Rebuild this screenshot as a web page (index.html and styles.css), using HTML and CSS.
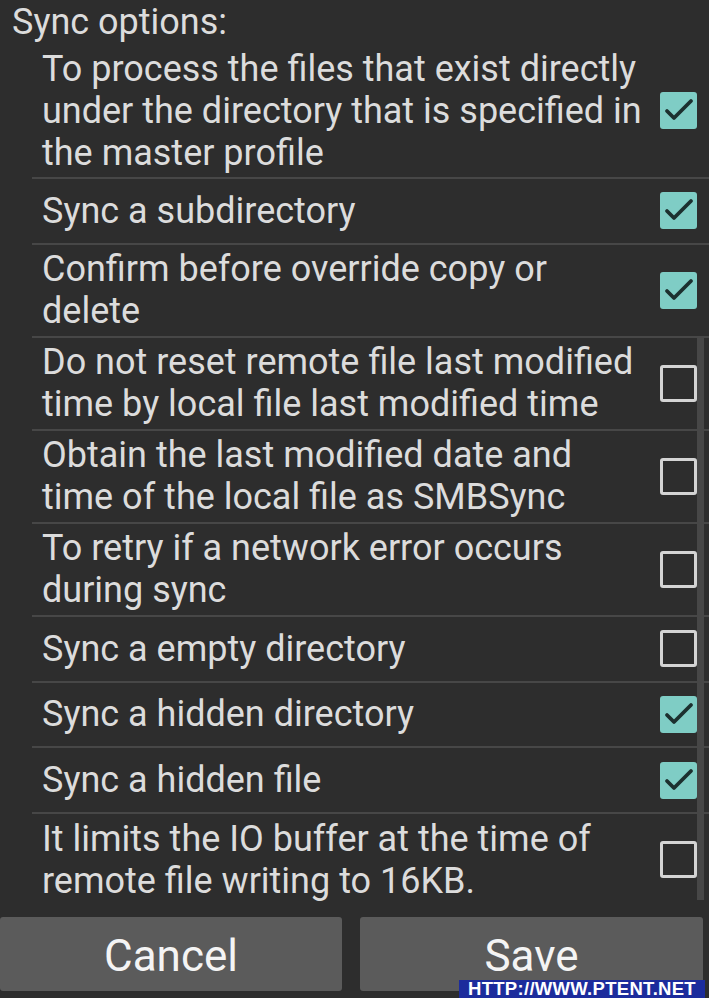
FILE: index.html
```html
<!DOCTYPE html>
<html>
<head>
<meta charset="utf-8">
<link rel="stylesheet" href="styles.css">
</head>
<body>
<div class="screen">
  <div class="header">Sync options:</div>
  <div class="list">
    <div class="row"><div class="label">To process the files that exist directly under the directory that is specified in the master profile</div><span class="cb on"><svg viewBox="0 0 37 37"><polyline points="7,19 14,26 31,9"/></svg></span></div>
    <div class="row"><div class="label">Sync a subdirectory</div><span class="cb on"><svg viewBox="0 0 37 37"><polyline points="7,19 14,26 31,9"/></svg></span></div>
    <div class="row"><div class="label">Confirm before override copy or delete</div><span class="cb on"><svg viewBox="0 0 37 37"><polyline points="7,19 14,26 31,9"/></svg></span></div>
    <div class="row"><div class="label">Do not reset remote file last modified time by local file last modified time</div><span class="cb"></span></div>
    <div class="row"><div class="label">Obtain the last modified date and time of the local file as SMBSync</div><span class="cb"></span></div>
    <div class="row"><div class="label">To retry if a network error occurs during sync</div><span class="cb"></span></div>
    <div class="row"><div class="label">Sync a empty directory</div><span class="cb"></span></div>
    <div class="row"><div class="label">Sync a hidden directory</div><span class="cb on"><svg viewBox="0 0 37 37"><polyline points="7,19 14,26 31,9"/></svg></span></div>
    <div class="row"><div class="label">Sync a hidden file</div><span class="cb on"><svg viewBox="0 0 37 37"><polyline points="7,19 14,26 31,9"/></svg></span></div>
    <div class="row last"><div class="label">It limits the IO buffer at the time of remote file writing to 16KB.</div><span class="cb"></span></div>
  </div>
  <div class="buttons">
    <div class="btn"><span class="btn-text">Cancel</span></div>
    <div class="btn"><span class="btn-text">Save</span></div>
  </div>
  <div class="scrollbar"></div>
  <div class="watermark">HTTP://WWW.PTENT.NET</div>
</div>
</body>
</html>
```
FILE: styles.css
```css
html, body {
  margin: 0;
  padding: 0;
  background: #2d2d2d;
}
.screen {
  position: relative;
  width: 709px;
  height: 998px;
  overflow: hidden;
  background: #2d2d2d;
  font-family: Roboto, "Noto Sans", sans-serif;
  color: #dcdcdc;
}
.header {
  height: 44px;
  line-height: 44px;
  padding-left: 12px;
  font-size: 36px;
}
.list {
  margin-left: 32px;
}
.row {
  display: flex;
  align-items: center;
  box-sizing: border-box;
  min-height: 65.75px;
  padding: 3.5px 0 3.5px 10px;
  border-bottom: 2px solid #474747;
}
.row.last {
  border-bottom: none;
}
.label {
  flex: 1;
  font-size: 36px;
  line-height: 42px;
}
.cb {
  flex: none;
  box-sizing: border-box;
  width: 37px;
  height: 37px;
  margin: 0 12px 0 18px;
  border: 3px solid #d4d4d4;
  border-radius: 3px;
}
.cb.on {
  border: none;
  background: #7fcdc5;
}
.cb svg {
  display: block;
  width: 37px;
  height: 37px;
}
.cb polyline {
  fill: none;
  stroke: #1c302f;
  stroke-width: 3.8;
  stroke-linecap: round;
  stroke-linejoin: round;
}
.buttons {
  display: grid;
  grid-template-columns: 342px 343px;
  column-gap: 18px;
  padding-top: 12px;
}
.btn {
  height: 74px;
  background: #5b5b5b;
  border-radius: 3px;
  color: #f4f4f4;
  font-size: 44px;
  line-height: 1;
  display: flex;
  align-items: center;
  justify-content: center;
}
.btn-text {
  line-height: 40px;
  padding-top: 4px;
}
.scrollbar {
  position: absolute;
  top: 338px;
  right: 5px;
  width: 7px;
  height: 562px;
  background: #474747;
}
.watermark {
  position: absolute;
  right: 4px;
  bottom: 0;
  width: 246px;
  height: 18px;
  line-height: 18px;
  background: #1c2c9c;
  color: #ffffff;
  font-family: "Liberation Sans", Arial, sans-serif;
  font-weight: bold;
  font-size: 18.5px;
  letter-spacing: 0.3px;
  text-align: center;
  white-space: nowrap;
}
```
